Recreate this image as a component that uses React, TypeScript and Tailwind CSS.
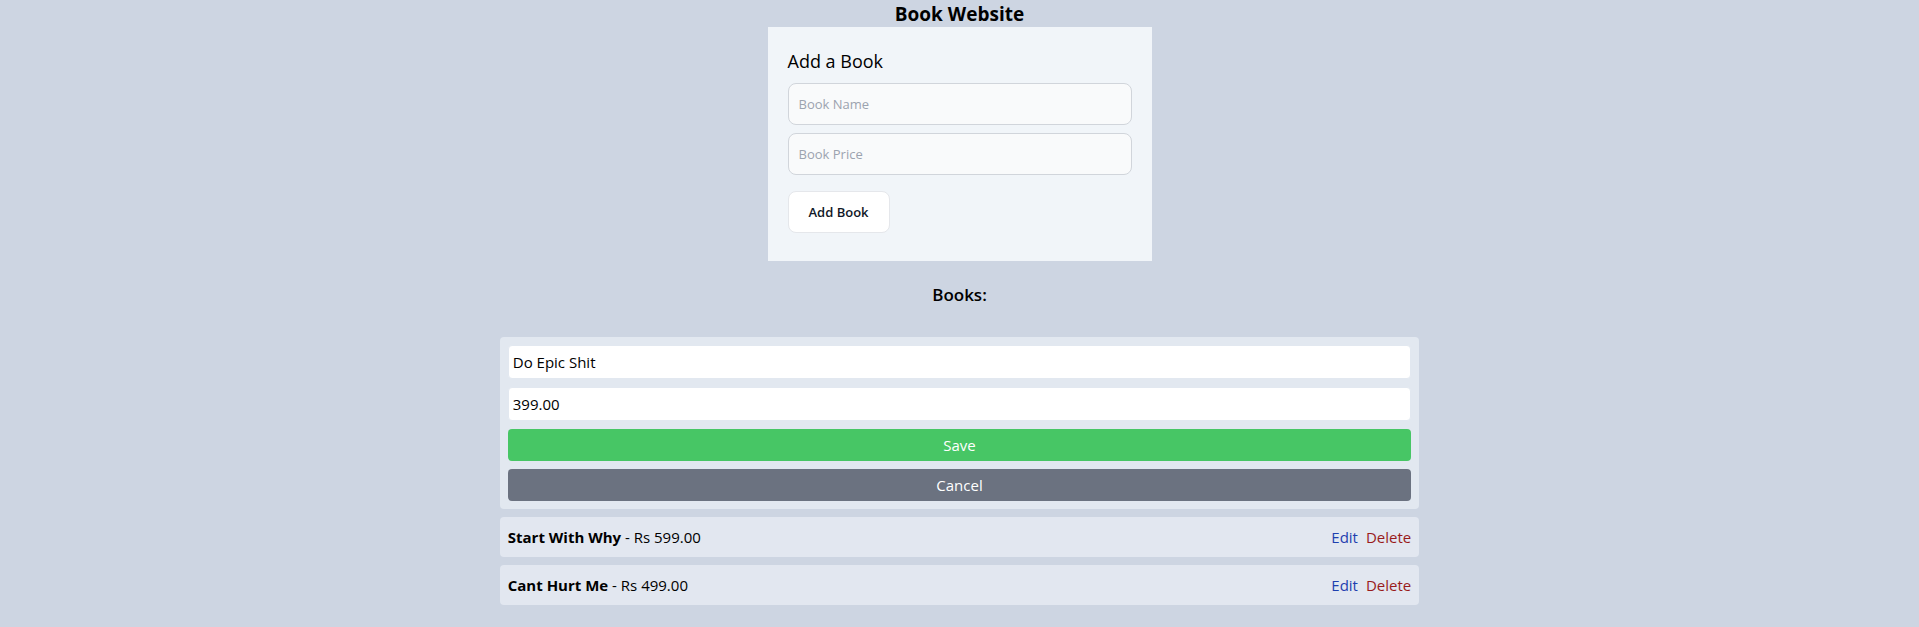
import { useState } from "react";

const books = [
  { name: "Start With Why", price: "599.00" },
  { name: "Cant Hurt Me", price: "499.00" },
];

const fieldClass =
  "block w-full rounded-lg border border-[#d1d5db] bg-[#f9fafb] p-2.5 text-[13px] leading-5 text-[#111827] placeholder:text-[#9ca3af]";
const editClass =
  "block w-full rounded border border-[#e2e8f0] bg-white p-1 text-[15px] leading-6 text-black";

export default function App() {
  const [name, setName] = useState("Do Epic Shit");
  const [price, setPrice] = useState("399.00");

  return (
    <main className="flex min-h-screen flex-col items-center bg-[#cdd5e2] font-['Open_Sans','Noto_Sans',sans-serif] text-[15px] leading-6 text-black">
      <h1 className="pt-0.5 text-[19px] leading-[25px] font-bold">Book Website</h1>

      <form className="w-96 max-w-full bg-[#f1f5f9] p-5" onSubmit={(e) => e.preventDefault()}>
        <h2 className="mb-2 text-[18px] leading-7">Add a Book</h2>
        <input aria-label="Book Name" placeholder="Book Name" className={`${fieldClass} mb-2`} />
        <input aria-label="Book Price" placeholder="Book Price" className={`${fieldClass} mb-4`} />
        <button
          type="submit"
          className="mb-2 block rounded-lg border border-[#e5e7eb] bg-white px-5 py-2.5 text-[13px] leading-5 font-semibold text-[#111827]"
        >
          Add Book
        </button>
      </form>

      <h2 className="mt-5 text-[17px] leading-7 font-semibold">Books:</h2>

      <ul className="mt-2 flex w-1/2 flex-col gap-2 p-5">
        <li className="flex flex-col gap-2 rounded bg-[#e2e8f0] p-2">
          <input
            aria-label="Edit name"
            className={editClass}
            value={name}
            onChange={(e) => setName(e.target.value)}
          />
          <input
            aria-label="Edit price"
            className={editClass}
            value={price}
            onChange={(e) => setPrice(e.target.value)}
          />
          <button type="button" className="rounded bg-[#47c665] py-1 text-white">
            Save
          </button>
          <button type="button" className="rounded bg-[#6b7280] py-1 text-white">
            Cancel
          </button>
        </li>
        {books.map((book) => (
          <li
            key={book.name}
            className="flex items-center justify-between rounded bg-[#e2e7f0] p-2"
          >
            <span>
              <strong className="font-bold">{book.name}</strong> - Rs {book.price}
            </span>
            <span className="flex gap-2">
              <button type="button" className="text-[#1e40af]">
                Edit
              </button>
              <button type="button" className="text-[#991b1b]">
                Delete
              </button>
            </span>
          </li>
        ))}
      </ul>
    </main>
  );
}
